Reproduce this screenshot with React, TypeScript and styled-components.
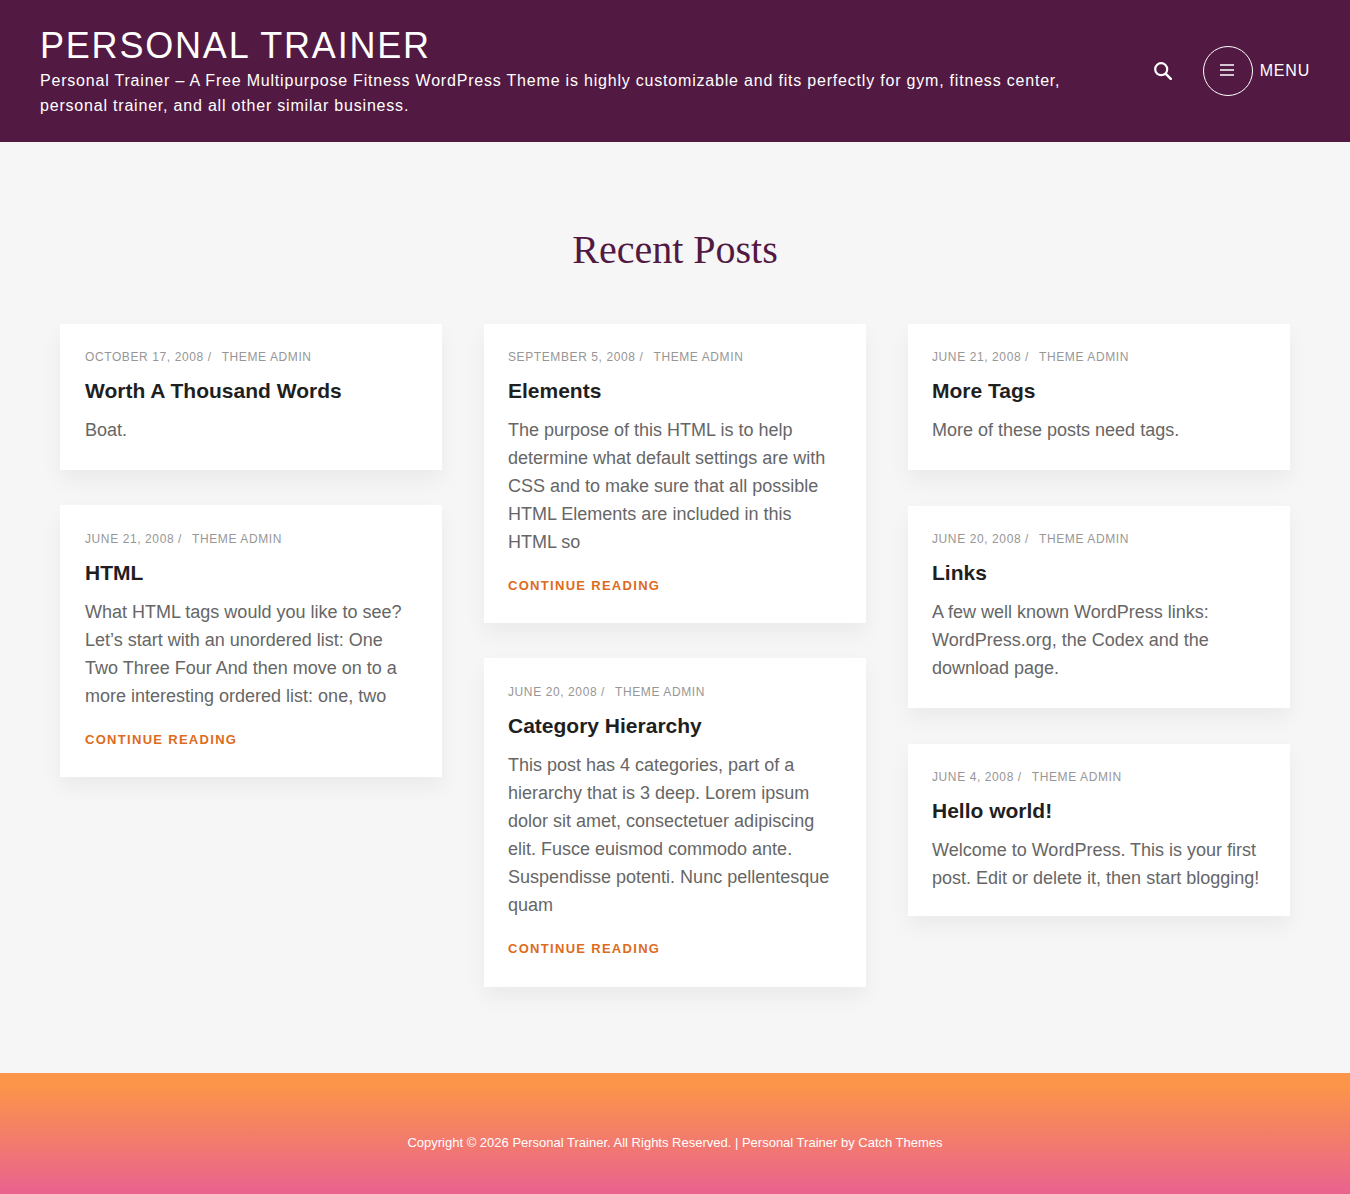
import React from "react";
import styled, { createGlobalStyle } from "styled-components";

const GlobalStyle = createGlobalStyle`
    html, body {
        margin: 0;
        padding: 0;
        background: #f6f6f6;
        font-family: "Liberation Sans", Arial, sans-serif;
    }
    * {
        box-sizing: border-box;
    }
`;

const Header = styled.header`
    height: 142px;
    background: #521a42;
    padding: 0 40px;
    display: flex;
    align-items: center;
    justify-content: space-between;
    color: #fff;
`;
const Branding = styled.div`
    width: 1040px;
    padding-top: 1px;
`;
const SiteTitle = styled.div`
    font-size: 36px;
    line-height: 42px;
    letter-spacing: 0.05em;
    margin-bottom: 1px;
    text-transform: uppercase;
`;
const Tagline = styled.div`
    font-size: 16px;
    line-height: 25px;
    letter-spacing: 0.05em;
`;
const HeaderActions = styled.div`
    display: flex;
    align-items: center;
`;
const SearchButton = styled.div`
    display: flex;
    margin: 0 31px 1px 0;
`;
const MenuCircle = styled.div`
    width: 50px;
    height: 50px;
    border: 1px solid #fff;
    border-radius: 50%;
    display: flex;
    align-items: center;
    justify-content: center;
    padding: 0 2px 3px 0;
    margin-right: 7px;
`;
const MenuLabel = styled.span`
    font-size: 16px;
    letter-spacing: 0.05em;
`;

const Main = styled.main`
    height: 931px;
    padding: 87px 60px 0;
`;
const SectionTitle = styled.h2`
    margin: 0 0 53px;
    height: 42px;
    text-align: center;
    font-family: "Liberation Serif", "Times New Roman", serif;
    font-weight: 400;
    font-size: 40px;
    line-height: 42px;
    color: #521a42;
`;
const Columns = styled.div`
    display: grid;
    grid-template-columns: repeat(3, 382px);
    column-gap: 42px;
`;
const Column = styled.div<{ $gap: number }>`
    display: flex;
    flex-direction: column;
    gap: ${(p) => p.$gap}px;
`;
const Card = styled.article<{ $inset: number; $top: number; $bottom: number }>`
    background: #fff;
    padding: ${(p) => p.$top}px 24px ${(p) => p.$bottom}px ${(p) => p.$inset}px;
    box-shadow: 0 10px 20px rgba(0, 0, 0, 0.05);
`;
const Meta = styled.div`
    display: flex;
    font-size: 12px;
    line-height: 16px;
    letter-spacing: 0.6px;
    color: #969696;
    text-transform: uppercase;
`;
const MetaDate = styled.span`
    margin-right: 10px;
`;
const PostTitle = styled.h3`
    margin: 10px 0 9px;
    font-size: 21px;
    line-height: 32px;
    font-weight: 700;
    color: #1f1f1f;
`;
const Excerpt = styled.p`
    margin: 0;
    font-size: 18px;
    line-height: 28px;
    color: #666;
`;
const ContinueLink = styled.a`
    display: block;
    margin: 22px 0 3px;
    font-size: 13px;
    line-height: 16px;
    font-weight: 700;
    letter-spacing: 1.3px;
    text-transform: uppercase;
    color: #dd6b20;
`;

const Footer = styled.footer`
    height: 121px;
    display: flex;
    align-items: center;
    justify-content: center;
    padding-top: 17px;
    background: linear-gradient(to bottom, #fc9549 10%, #e9628f 100%);
    font-size: 13px;
    color: #fff;
`;

type Post = {
    date: string;
    title: string;
    excerpt: string;
    more?: boolean;
    top?: number;
    bottom?: number;
};

const columns: { gap: number; inset: number; posts: Post[] }[] = [
    {
        gap: 35,
        inset: 25,
        posts: [
            { date: "October 17, 2008", title: "Worth A Thousand Words", excerpt: "Boat." },
            {
                date: "June 21, 2008",
                title: "HTML",
                excerpt: "What HTML tags would you like to see? Let’s start with an unordered list: One Two Three Four And then move on to a more interesting ordered list: one, two",
                more: true,
                top: 26,
            },
        ],
    },
    {
        gap: 35,
        inset: 24,
        posts: [
            {
                date: "September 5, 2008",
                title: "Elements",
                excerpt: "The purpose of this HTML is to help determine what default settings are with CSS and to make sure that all possible HTML Elements are included in this HTML so",
                more: true,
            },
            {
                date: "June 20, 2008",
                title: "Category Hierarchy",
                excerpt: "This post has 4 categories, part of a hierarchy that is 3 deep. Lorem ipsum dolor sit amet, consectetuer adipiscing elit. Fusce euismod commodo ante. Suspendisse potenti. Nunc pellentesque quam",
                more: true,
                top: 26,
                bottom: 27,
            },
        ],
    },
    {
        gap: 36,
        inset: 24,
        posts: [
            { date: "June 21, 2008", title: "More Tags", excerpt: "More of these posts need tags." },
            {
                date: "June 20, 2008",
                title: "Links",
                excerpt: "A few well known WordPress links: WordPress.org, the Codex and the download page.",
            },
            {
                date: "June 4, 2008",
                title: "Hello world!",
                excerpt: "Welcome to WordPress. This is your first post. Edit or delete it, then start blogging!",
                bottom: 24,
            },
        ],
    },
];

function PostCard({ post, inset }: { post: Post; inset: number }) {
    return (
        <Card $inset={inset} $top={post.top ?? 25} $bottom={post.bottom ?? 26}>
            <Meta>
                <MetaDate>{post.date} /</MetaDate>
                <span>Theme Admin</span>
            </Meta>
            <PostTitle>{post.title}</PostTitle>
            <Excerpt>{post.excerpt}</Excerpt>
            {post.more ? <ContinueLink>Continue Reading</ContinueLink> : <></>}
        </Card>
    );
}

export default function App() {
    return (
        <>
            <GlobalStyle />
            <Header>
                <Branding>
                    <SiteTitle>Personal Trainer</SiteTitle>
                    <Tagline>
                        Personal Trainer – A Free Multipurpose Fitness WordPress Theme is highly customizable and fits perfectly for gym, fitness center, personal trainer, and all other similar business.
                    </Tagline>
                </Branding>
                <HeaderActions>
                    <SearchButton>
                        <svg width="18" height="18" viewBox="0 0 18 18" fill="none" stroke="#fff">
                            <circle cx="7.2" cy="7.2" r="6" strokeWidth="2.2" />
                            <path d="M11.8 11.8l5 5" strokeWidth="2.6" strokeLinecap="round" />
                        </svg>
                    </SearchButton>
                    <MenuCircle>
                        <svg width="14" height="12" viewBox="0 0 14 12" stroke="#fff" strokeWidth="1.5">
                            <path d="M0 1h14M0 6h14M0 11h14" />
                        </svg>
                    </MenuCircle>
                    <MenuLabel>MENU</MenuLabel>
                </HeaderActions>
            </Header>
            <Main>
                <SectionTitle>Recent Posts</SectionTitle>
                <Columns>
                    {columns.map((col, i) => (
                        <Column key={i} $gap={col.gap}>
                            {col.posts.map((post) => (
                                <PostCard key={post.title} post={post} inset={col.inset} />
                            ))}
                        </Column>
                    ))}
                </Columns>
            </Main>
            <Footer>Copyright © 2026 Personal Trainer. All Rights Reserved. | Personal Trainer by Catch Themes</Footer>
        </>
    );
}
